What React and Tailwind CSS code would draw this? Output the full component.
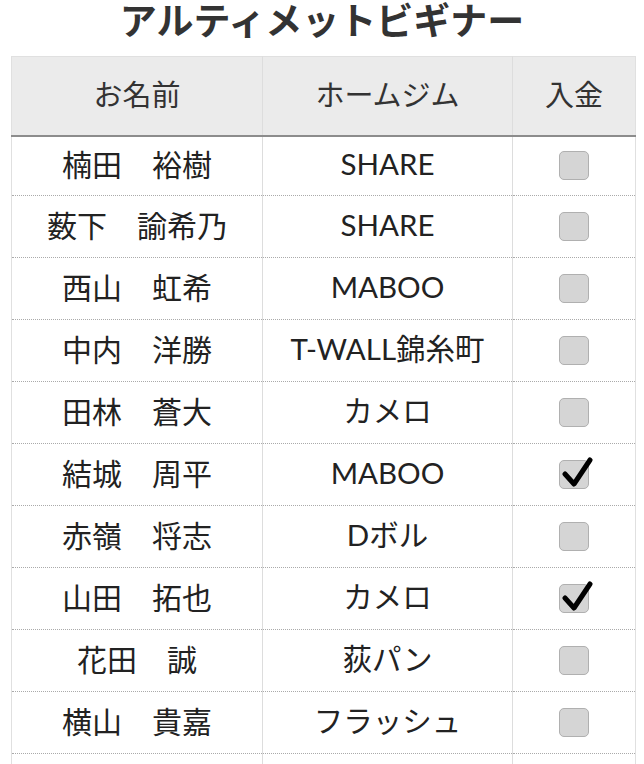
import React from "react";

const members = [
  { name: "楠田　裕樹", gym: "SHARE", paid: false },
  { name: "薮下　諭希乃", gym: "SHARE", paid: false },
  { name: "西山　虹希", gym: "MABOO", paid: false },
  { name: "中内　洋勝", gym: "T-WALL錦糸町", paid: false },
  { name: "田林　蒼大", gym: "カメロ", paid: false },
  { name: "結城　周平", gym: "MABOO", paid: true },
  { name: "赤嶺　将志", gym: "Dボル", paid: false },
  { name: "山田　拓也", gym: "カメロ", paid: true },
  { name: "花田　誠", gym: "荻パン", paid: false },
  { name: "横山　貴嘉", gym: "フラッシュ", paid: false },
  { name: "", gym: "", paid: false },
];

const Check = ({ checked }) => (
  <div className="relative mx-auto h-[29px] w-[30px] rounded-[5px] border border-[#b0b0b0] bg-[#d5d5d5]">
    {checked ? (
      <svg
        className="absolute -left-[1px] -top-[4px]"
        width="34"
        height="34"
        viewBox="0 0 34 34"
        fill="none"
      >
        <path
          d="M6 17 L15 27 L31 3"
          stroke="#000"
          strokeWidth="5"
          strokeLinecap="round"
          strokeLinejoin="round"
        />
      </svg>
    ) : null}
  </div>
);

export default function App() {
  return (
    <div
      className="min-h-[764px] bg-white text-[#222]"
      style={{ fontFamily: '"Lato", "Noto Sans CJK JP", sans-serif' }}
    >
      <h1 className="h-[42px] text-center text-[37px] font-bold leading-[42px] text-[#333]">
        アルティメットビギナー
      </h1>
      <div className="mt-[14px] pl-[11px]">
        <table className="w-[624px] table-fixed border-collapse border-l border-r border-t border-[#e0e0e0]">
          <colgroup>
            <col className="w-[251px]" />
            <col className="w-[250px]" />
            <col className="w-[123px]" />
          </colgroup>
          <thead>
            <tr className="h-[79px] border-b-2 border-[#8c8c8c] bg-[#ebebeb]">
              <th className="border-r border-[#dddddd] pb-[2px] text-[29px] font-normal text-[#333]">お名前</th>
              <th className="border-r border-[#dddddd] pb-[2px] text-[29px] font-normal text-[#333]">ホームジム</th>
              <th className="pb-[2px] text-[29px] font-normal text-[#333]">入金</th>
            </tr>
          </thead>
          <tbody>
            {members.map((m, i) => (
              <tr
                key={i}
                className={`${i === 0 ? "h-[60px]" : "h-[62px]"} border-b border-dotted border-[#aaaaaa]`}
              >
                <td className="border-r border-solid border-[#dddddd] pb-[3px] text-center text-[30px] text-[#222]">
                  {m.name}
                </td>
                <td className="border-r border-solid border-[#dddddd] pb-[3px] text-center text-[29.5px] text-[#222]">
                  {m.gym}
                </td>
                <td className="text-center">
                  {m.name ? <Check checked={m.paid} /> : null}
                </td>
              </tr>
            ))}
          </tbody>
        </table>
      </div>
    </div>
  );
}
